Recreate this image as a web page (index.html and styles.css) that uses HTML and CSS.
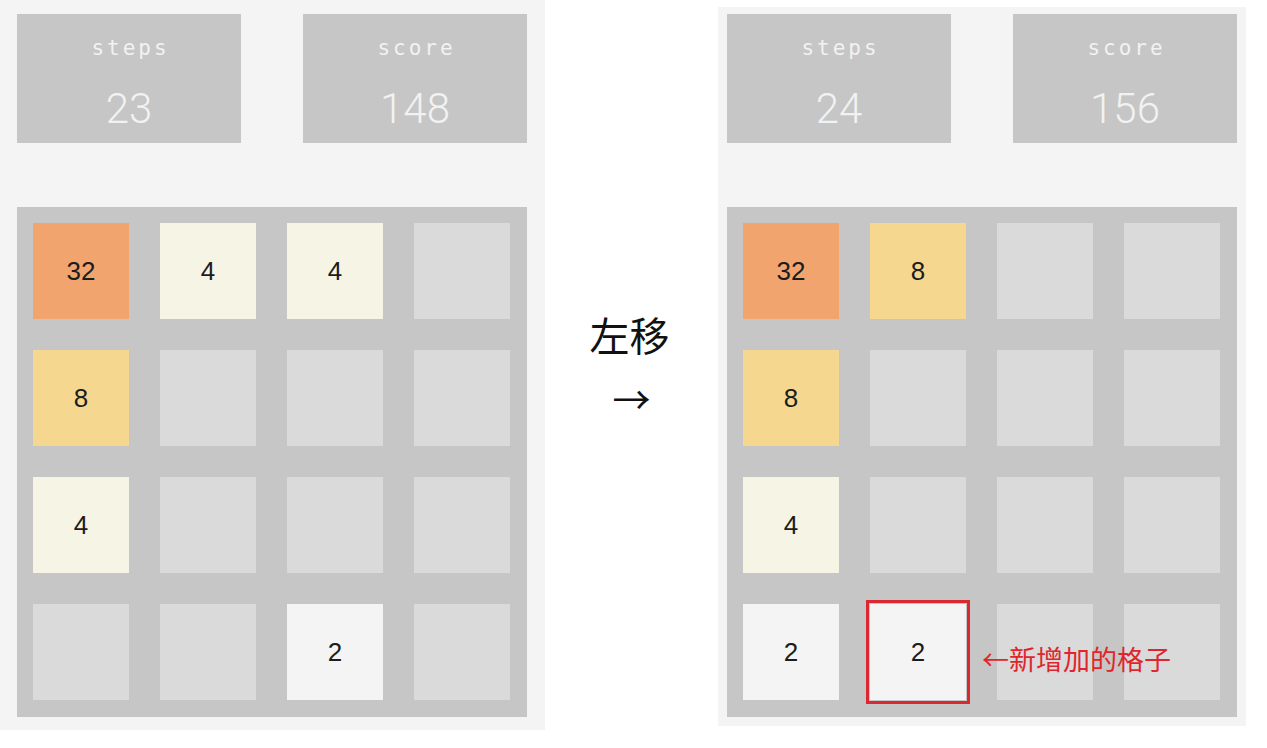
FILE: index.html
```html
<!DOCTYPE html>
<html lang="zh-CN">

<head>
  <meta charset="UTF-8">
  <meta name="viewport" content="width=device-width, initial-scale=1.0">
  <title>2048</title>
  <link rel="stylesheet" href="styles.css">
</head>

<body>
  <div class="page">

    <!-- before the move -->
    <div class="gamePanel gamePanel--before">
      <div class="scoreRow">
        <div class="scoreBox">
          <div class="scoreLabel">steps</div>
          <div class="scoreValue">23</div>
        </div>
        <div class="scoreBox">
          <div class="scoreLabel">score</div>
          <div class="scoreValue">148</div>
        </div>
      </div>
      <div class="board">
        <div class="tile tile32">32</div>
        <div class="tile tile4">4</div>
        <div class="tile tile4">4</div>
        <div class="tile"></div>

        <div class="tile tile8">8</div>
        <div class="tile"></div>
        <div class="tile"></div>
        <div class="tile"></div>

        <div class="tile tile4">4</div>
        <div class="tile"></div>
        <div class="tile"></div>
        <div class="tile"></div>

        <div class="tile"></div>
        <div class="tile"></div>
        <div class="tile tile2">2</div>
        <div class="tile"></div>
      </div>
    </div>

    <div class="moveLabel">
      <div class="moveText">左移</div>
      <div class="moveArrow">→</div>
    </div>

    <!-- after the move -->
    <div class="gamePanel gamePanel--after">
      <div class="scoreRow">
        <div class="scoreBox">
          <div class="scoreLabel">steps</div>
          <div class="scoreValue">24</div>
        </div>
        <div class="scoreBox">
          <div class="scoreLabel">score</div>
          <div class="scoreValue">156</div>
        </div>
      </div>
      <div class="board">
        <div class="tile tile32">32</div>
        <div class="tile tile8">8</div>
        <div class="tile"></div>
        <div class="tile"></div>

        <div class="tile tile8">8</div>
        <div class="tile"></div>
        <div class="tile"></div>
        <div class="tile"></div>

        <div class="tile tile4">4</div>
        <div class="tile"></div>
        <div class="tile"></div>
        <div class="tile"></div>

        <div class="tile tile2">2</div>
        <div class="tile tile2 tileNew">2
          <span class="newNote">←新增加的格子</span>
        </div>
        <div class="tile"></div>
        <div class="tile"></div>
      </div>
    </div>

  </div>
</body>

</html>
```

FILE: styles.css
```css
body {
  margin: 0;
  background: #ffffff;
  font-family: "Liberation Sans", Arial, sans-serif;
}

.page {
  display: flex;
  align-items: flex-start;
  width: 1267px;
  height: 748px;
}

.gamePanel {
  background: #f4f4f4;
  display: flex;
  flex-direction: column;
}

.gamePanel--before {
  width: 545px;
  height: 730px;
  padding: 14px 18px 0 17px;
  box-sizing: border-box;
}

.gamePanel--after {
  width: 528px;
  height: 719px;
  margin-top: 7px;
  padding: 7px 9px 0 9px;
  box-sizing: border-box;
}

.scoreRow {
  display: flex;
  justify-content: space-between;
}

.scoreBox {
  width: 224px;
  height: 129px;
  background: #c6c6c6;
  color: #f2f2f2;
  text-align: center;
}

.scoreLabel {
  font-family: "DejaVu Sans Mono", monospace;
  font-size: 21px;
  letter-spacing: 3px;
  text-indent: 3px;
  margin-top: 21px;
  line-height: 26px;
}

.scoreValue {
  font-family: Roboto, "Liberation Sans", sans-serif;
  font-weight: 300;
  font-size: 42px;
  line-height: 48px;
  margin-top: 24px;
}

.board {
  margin-top: 64px;
  width: 510px;
  height: 510px;
  box-sizing: border-box;
  padding: 16px;
  background: #c6c6c6;
  display: grid;
  grid-template-columns: repeat(4, 96px);
  grid-template-rows: repeat(4, 96px);
  column-gap: 31px;
  row-gap: 31px;
}

.tile {
  background: #dadada;
  display: flex;
  align-items: center;
  justify-content: center;
  font-size: 26px;
  color: #1c1c1c;
  position: relative;
}

.tile2 {
  background: #f4f4f4;
}

.tile4 {
  background: #f6f4e4;
}

.tile8 {
  background: #f5d78f;
}

.tile32 {
  background: #f2a46f;
}

.tileNew {
  outline: 3px solid #db2730;
  outline-offset: 1px;
  z-index: 1;
}

.newNote {
  position: absolute;
  left: 112px;
  top: 40px;
  white-space: nowrap;
  font-family: "Noto Sans CJK SC", sans-serif;
  font-size: 27px;
  line-height: 30px;
  color: #e0262d;
}

.moveLabel {
  width: 173px;
  margin-top: 306px;
  text-align: center;
  font-family: "Noto Sans CJK SC", sans-serif;
  color: #111111;
}

.moveText {
  font-size: 40px;
  line-height: 56px;
  margin-left: -4px;
}

.moveArrow {
  font-size: 38px;
  line-height: 40px;
  margin-top: 16px;
}
```
